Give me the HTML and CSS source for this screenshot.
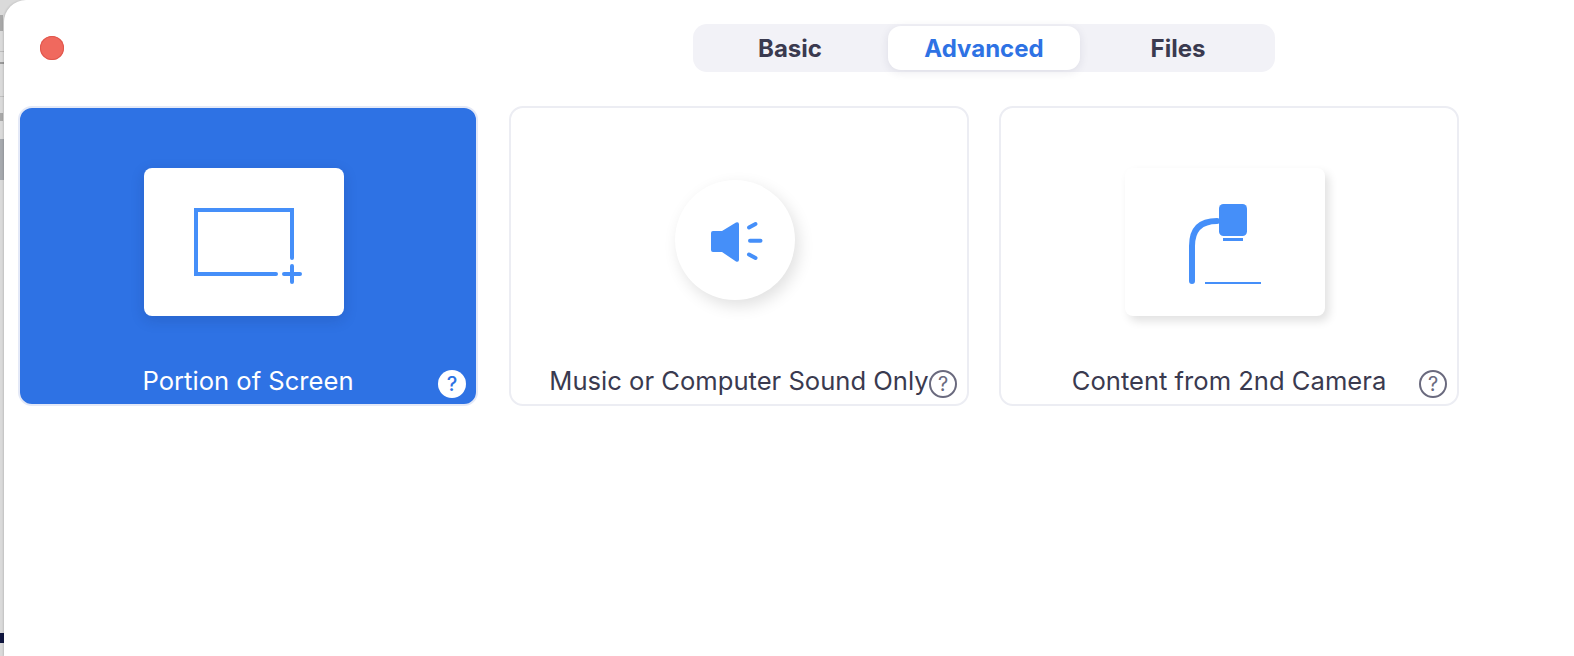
FILE: index.html
```html
<!DOCTYPE html>
<html lang="en">
<head>
  <meta charset="UTF-8" />
  <title>Share Screen</title>
  <link rel="stylesheet" href="styles.css">
</head>
<body>
  <div class="backdrop">
    <span class="peek peek-t"></span>
    <span class="peek peek-a"></span>
    <span class="peek peek-b"></span>
    <span class="peek peek-e"></span>
    <span class="peek peek-x"></span>
    <span class="peek peek-c"></span>
    <span class="peek peek-d"></span>
  </div>

  <div class="window">
    <header class="titlebar">
      <span class="close-dot"></span>
      <nav class="tabs">
        <span class="tab">Basic</span>
        <span class="tab active">Advanced</span>
        <span class="tab">Files</span>
      </nav>
    </header>

    <section class="cards">
      <div class="card selected">
        <div class="thumb">
          <svg width="200" height="148" viewBox="0 0 200 148" fill="none" stroke="#458ff9" stroke-width="4">
            <path d="M132 106 H52 V42 H148 V90" stroke-linecap="round" />
            <path d="M148 98 V114 M140 106 H156" stroke-linecap="round" />
          </svg>
        </div>
        <span class="label">Portion of Screen</span>
        <span class="help">?</span>
      </div>

      <div class="card">
        <div class="thumb round">
          <svg width="120" height="120" viewBox="0 0 120 120" fill="#458ff9">
            <path d="M38 51 H47 L61 42.500 Q64 41.500 64 44.500 V79.500 Q64 82.500 61 81.500 L47 72 H38 Q36 72 36 70 V53 Q36 51 38 51 Z" />
            <g stroke="#458ff9" stroke-width="4" stroke-linecap="round">
              <path d="M74 47.500 L80.500 44" />
              <path d="M75 60.700 H85.500" />
              <path d="M74 74.500 L80.500 78" />
            </g>
          </svg>
        </div>
        <span class="label">Music or Computer Sound Only</span>
        <span class="help">?</span>
      </div>

      <div class="card last">
        <div class="thumb">
          <svg width="200" height="148" viewBox="0 0 200 148" fill="none">
            <path d="M67 113 V78 Q67 53 92 53" stroke="#458ff9" stroke-width="6" stroke-linecap="round" />
            <rect x="94" y="36" width="28" height="32" rx="4.500" fill="#458ff9" />
            <rect x="98" y="70" width="20" height="3" fill="#458ff9" />
            <rect x="80" y="114" width="56" height="2" fill="#458ff9" />
          </svg>
        </div>
        <span class="label">Content from 2nd Camera</span>
        <span class="help">?</span>
      </div>
    </section>
  </div>
</body>
</html>
```

FILE: styles.css
```css
html, body {
  margin: 0;
  height: 100%;
  overflow: hidden;
}

body {
  font-family: Inter, "Liberation Sans", sans-serif;
  background: #dadada;
  position: relative;
}

/* bits of whatever sits behind the window */
.backdrop {
  position: absolute;
  left: 0;
  top: 0;
  bottom: 0;
  width: 8px;
  overflow: hidden;
}

.peek {
  position: absolute;
  left: 0;
  width: 100%;
}

.peek-t { top: 15px; height: 16px; width: 3px; background: #a8a8a8; }
.peek-x { top: 113px; height: 8px; width: 3px; background: #a8a8a8; }
.peek-a { top: 51px; height: 1px; background: #bdbdbd; }
.peek-b { top: 62px; height: 2px; background: #9a9a9a; }
.peek-e { top: 96px; height: 1px; background: #c0c0c0; }
.peek-c { top: 139px; height: 41px; background: #a6a9ae; }
.peek-d { top: 633px; height: 10px; background: #10163f; }

.window {
  position: relative;
  margin-left: 4px;
  height: 100%;
  background: #fff;
  border-top-left-radius: 22px;
  box-shadow: -1px 0 2px rgba(0, 0, 0, 0.12);
}

.titlebar {
  height: 106px;
  position: relative;
}

.close-dot {
  position: absolute;
  left: 36px;
  top: 36px;
  width: 24px;
  height: 24px;
  border-radius: 50%;
  background: #f0695e;
  box-shadow: inset 0 0 0 1px #e0574d;
}

.tabs {
  position: absolute;
  left: 689px;
  top: 24px;
  width: 582px;
  height: 48px;
  box-sizing: border-box;
  padding: 2px 1px;
  display: flex;
  background: #f2f2f7;
  border-radius: 14px;
}

.tab {
  flex: 1;
  display: flex;
  align-items: center;
  justify-content: center;
  font-size: 24px;
  font-weight: 700;
  color: #3a3a4f;
  border-radius: 13px;
}

.tab.active {
  margin: 0 2px;
  color: #2e72e4;
  background: #fff;
  box-shadow: 0 2px 10px rgba(40, 40, 80, 0.1);
}

.cards {
  display: flex;
  gap: 31px;
  padding-left: 14px;
}

.card {
  position: relative;
  width: 460px;
  height: 300px;
  box-sizing: border-box;
  background: #fff;
  border: 2px solid #ecedf3;
  border-radius: 14px;
  display: flex;
  flex-direction: column;
  align-items: center;
  color: #3a3a4f;
}

.card.last {
  margin-left: -1px;
}

.card.selected {
  background: #2e72e4;
  border-color: #e4e9f7;
  color: #fff;
}

/* the pictures sit a little left of the card's centre */
.thumb {
  width: 200px;
  height: 148px;
  margin: 60px 8px 0 0;
  background: #fff;
  border-radius: 8px;
  display: flex;
  box-shadow: 4px 5px 10px rgba(0, 0, 0, 0.12);
}

.selected .thumb {
  box-shadow: 0 4px 14px rgba(20, 40, 90, 0.18);
}

.thumb.round {
  width: 120px;
  height: 120px;
  margin-top: 72px;
  border-radius: 50%;
  box-shadow: 4px 6px 16px rgba(0, 0, 0, 0.12);
}

.label {
  position: absolute;
  left: 0;
  right: 0;
  top: 258px;
  text-align: center;
  font-size: 25.600px;
  line-height: 30px;
}

.help {
  position: absolute;
  right: 10px;
  bottom: 6px;
  width: 28px;
  height: 28px;
  box-sizing: border-box;
  border-radius: 50%;
  border: 2px solid #6a6a7e;
  display: flex;
  align-items: center;
  justify-content: center;
  font-size: 20px;
  color: #6a6a7e;
}

.card.selected .help {
  border: 0;
  background: #fff;
  color: #2e72e4;
  font-weight: 500;
}
```
